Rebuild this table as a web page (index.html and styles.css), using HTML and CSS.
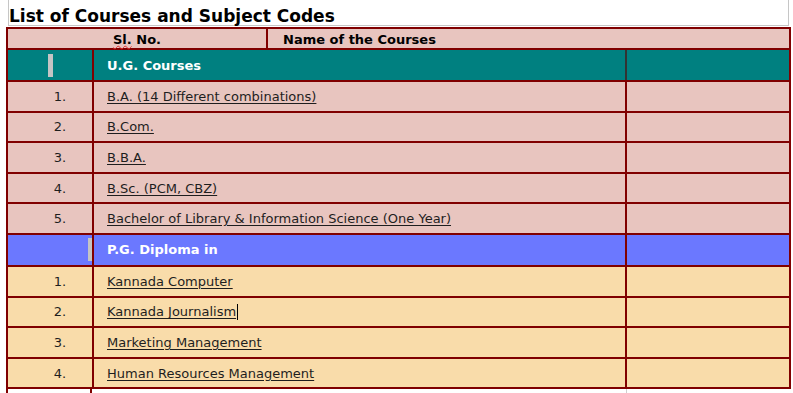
FILE: index.html
```html
<!DOCTYPE html>
<html>
<head>
<meta charset="utf-8">
<title>List of Courses and Subject Codes</title>
<link rel="stylesheet" href="styles.css">
</head>
<body>
<div class="page">
  <div class="title-box"><h1 class="title">List of Courses and Subject Codes</h1></div>
  <div class="grid">
    <div class="head">
      <div class="h-sl"><span class="spell">Sl.</span> No.</div>
      <div class="h-name">Name of the Courses</div>
    </div>
    <div class="row sec teal">
      <div class="c1 mid"><span class="marker"></span></div>
      <div class="c2 dark">U.G. Courses</div>
      <div class="c3"></div>
    </div>
    <div class="row pink">
      <div class="c1 num">1.</div>
      <div class="c2"><a href="#">B.A. (14 Different combinations)</a></div>
      <div class="c3"></div>
    </div>
    <div class="row pink">
      <div class="c1 num">2.</div>
      <div class="c2"><a href="#">B.Com.</a></div>
      <div class="c3"></div>
    </div>
    <div class="row pink">
      <div class="c1 num">3.</div>
      <div class="c2"><a href="#">B.B.A.</a></div>
      <div class="c3"></div>
    </div>
    <div class="row pink">
      <div class="c1 num">4.</div>
      <div class="c2"><a href="#">B.Sc. (PCM, CBZ)</a></div>
      <div class="c3"></div>
    </div>
    <div class="row pink">
      <div class="c1 num">5.</div>
      <div class="c2"><a href="#">Bachelor of Library &amp; Information Science (One Year)</a></div>
      <div class="c3"></div>
    </div>
    <div class="row sec blue">
      <div class="c1 end"><span class="marker thin"></span></div>
      <div class="c2">P.G. Diploma in</div>
      <div class="c3"></div>
    </div>
    <div class="row peach">
      <div class="c1 num">1.</div>
      <div class="c2"><a href="#">Kannada Computer</a></div>
      <div class="c3"></div>
    </div>
    <div class="row peach">
      <div class="c1 num">2.</div>
      <div class="c2"><a href="#">Kannada Journalism</a><span class="caret"></span></div>
      <div class="c3"></div>
    </div>
    <div class="row peach">
      <div class="c1 num">3.</div>
      <div class="c2"><a href="#">Marketing Management</a></div>
      <div class="c3"></div>
    </div>
    <div class="row peach last">
      <div class="c1 num">4.</div>
      <div class="c2"><a href="#">Human Resources Management</a></div>
      <div class="c3"></div>
    </div>
  </div>
  <div class="next">
    <div class="n1"></div>
    <div class="n2"></div>
  </div>
</div>
</body>
</html>
```
FILE: styles.css
```css
html, body {
  margin: 0;
  padding: 0;
  background: #ffffff;
  overflow: hidden;
}
.page {
  width: 793px;
  height: 393px;
  padding-left: 6px;
  box-sizing: border-box;
  font-family: "DejaVu Sans", Verdana, sans-serif;
  color: #1e1e1e;
}
.title-box {
  margin-left: 2px;
  width: 781px;
  height: 26px;
  box-sizing: border-box;
  border-left: 1px solid #c6c6c6;
  border-right: 1px solid #c6c6c6;
  border-bottom: 1px solid #c6c6c6;
}
.title {
  margin: 0;
  padding: 6px 0 0 0;
  font-size: 17px;
  line-height: 20px;
  font-weight: bold;
  color: #000;
}
.grid {
  margin-top: 1px;
  width: 785px;
  box-sizing: border-box;
  border: 2px solid #800000;
  border-bottom: none;
}
.head {
  display: flex;
  height: 21px;
  box-sizing: border-box;
  border-bottom: 2px solid #800000;
  background: #e8c5bf;
  font-size: 13px;
  font-weight: bold;
  line-height: 19px;
  color: #000;
}
.h-sl {
  width: 260px;
  box-sizing: border-box;
  border-right: 2px solid #800000;
  text-align: center;
  padding-top: 1px;
}
.spell {
  text-decoration: underline wavy #e03030;
  text-decoration-thickness: 1px;
  text-decoration-skip-ink: none;
  text-underline-offset: 1px;
}
.h-name {
  flex: 1;
  padding-left: 15px;
  padding-top: 1px;
}
.row {
  display: flex;
  height: 30.6px;
  box-sizing: border-box;
  border-bottom: 2px solid #800000;
  font-size: 13px;
  align-items: stretch;
}
.row.sec {
  height: 32px;
  font-weight: bold;
  color: #fff;
}
.c1 {
  width: 86px;
  flex: none;
  box-sizing: border-box;
  border-right: 2px solid #800000;
  display: flex;
  align-items: center;
}
.c2 {
  width: 533px;
  flex: none;
  box-sizing: border-box;
  border-right: 2px solid #800000;
  padding-left: 13px;
  display: flex;
  align-items: center;
}
.c2.dark {
  border-right-color: #333333;
}
.c3 {
  flex: 1;
}
.num {
  justify-content: center;
  padding-left: 20px;
}
.mid {
  justify-content: center;
}
.end {
  justify-content: flex-end;
}
.marker {
  display: block;
  width: 5px;
  height: 23px;
  margin-left: 1px;
  background: #c4c4c4;
}
.marker.thin {
  width: 4px;
  margin-left: 0;
}
.teal { background: #008080; }
.blue { background: #6b78ff; }
.pink { background: #e8c5bf; }
.peach { background: #f9dcaa; }
.row a {
  color: #1e1e1e;
  text-decoration: underline;
  text-underline-offset: 2px;
}
.caret {
  display: inline-block;
  width: 1px;
  height: 16px;
  background: #000;
  margin-left: 1px;
}
.next {
  display: flex;
  height: 20px;
}
.n1 {
  width: 86px;
  box-sizing: border-box;
  border-left: 2px solid #800000;
  border-right: 2px solid #800000;
}
.n2 {
  width: 535px;
  box-sizing: border-box;
  border-right: 1px solid #cfcfcf;
}
```
